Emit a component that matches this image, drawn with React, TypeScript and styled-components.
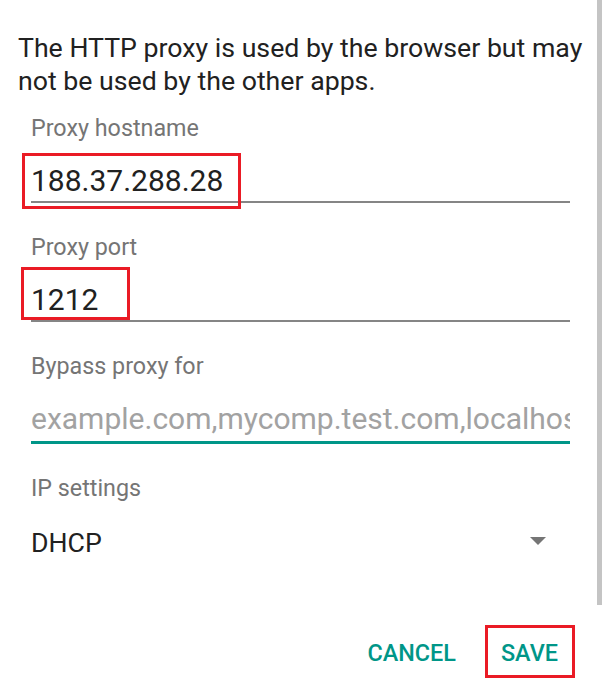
import React, { FC, ReactNode } from "react";
import styled, { createGlobalStyle } from "styled-components";

const GlobalStyle = createGlobalStyle`
  html, body {
    margin: 0;
    padding: 0;
    background: #ffffff;
  }
  body {
    font-family: Roboto, "Noto Sans", "Liberation Sans", sans-serif;
    color: #212121;
    -webkit-font-smoothing: antialiased;
  }
  * {
    box-sizing: border-box;
  }
`;

const Dialog = styled.div({
  width: 602,
  minHeight: 695,
  padding: "32px 0 0 0",
  position: "relative",
  overflow: "hidden",
});

const ScrollThumb = styled.div({
  position: "absolute",
  top: 0,
  right: 0,
  width: 5,
  height: 605,
  backgroundColor: "#c4c4c4",
});

const Intro = styled.p({
  margin: "0 0 17px 0",
  padding: "0 18px",
  fontSize: 26.7,
  lineHeight: "32.5px",
  color: "#212121",
});

const Fields = styled.div({
  display: "flex",
  flexDirection: "column",
  gap: 30,
  padding: "0 32px 0 31px",
});

const Field = styled.div({
  display: "flex",
  flexDirection: "column",
});

const Label = styled.div({
  fontSize: 23.3,
  lineHeight: "28px",
  color: "#757575",
});

const ValueRow = styled.div<{ $focused?: boolean }>(({ $focused }) => ({
  marginTop: 21,
  height: $focused ? 43 : 40,
  paddingBottom: $focused ? 4 : 2,
  borderBottom: $focused ? "3px solid #009688" : "2px solid #858585",
  fontSize: 30,
  lineHeight: "36px",
  whiteSpace: "nowrap",
}));

const Value = styled.span({
  color: "#212121",
});

const Placeholder = styled.div({
  color: "#a2a2a2",
  overflow: "hidden",
  whiteSpace: "nowrap",
});

const SpinnerRow = styled.div({
  marginTop: 23,
  height: 36,
  display: "flex",
  alignItems: "center",
  justifyContent: "space-between",
  paddingRight: 24,
});

const SpinnerText = styled.span({
  fontSize: 26.7,
  lineHeight: "36px",
  color: "#212121",
});

const Caret = styled.svg({
  width: 16,
  height: 8,
  marginTop: -4,
  fill: "#757575",
});

const Actions = styled.div({
  display: "flex",
  justifyContent: "flex-end",
  alignItems: "center",
  gap: 45,
  marginTop: 78,
  paddingRight: 44,
});

const ActionButton = styled.button({
  border: "none",
  background: "none",
  padding: 0,
  margin: 0,
  fontFamily: "Roboto, 'Noto Sans', 'Liberation Sans', sans-serif",
  fontWeight: 500,
  fontSize: 23.4,
  lineHeight: "28px",
  color: "#009688",
  textTransform: "uppercase",
  cursor: "pointer",
});

// red annotation frame drawn over a part of the screenshot
const Marked = styled.span<{ $t: number; $r: number; $b: number; $l: number }>(
  ({ $t, $r, $b, $l }) => ({
    position: "relative",
    display: "inline-block",
    verticalAlign: "top",
    "&::after": {
      content: '""',
      position: "absolute",
      top: -$t,
      right: -$r,
      bottom: -$b,
      left: -$l,
      border: "3px solid #ea1b25",
      pointerEvents: "none",
    },
  }),
);

type TextFieldProps = {
  label: string;
  focused?: boolean;
  children: ReactNode;
};

const TextField: FC<TextFieldProps> = ({ label, focused, children }) => (
  <Field>
    <Label>{label}</Label>
    <ValueRow $focused={focused}>{children}</ValueRow>
  </Field>
);

const App: FC = () => {
  return (
    <Dialog>
      <GlobalStyle />
      <ScrollThumb />
      <Intro>
        The HTTP proxy is used by the browser but may not be used by the other
        apps.
      </Intro>
      <Fields>
        <TextField label="Proxy hostname">
          <Marked $t={10} $r={18} $b={10} $l={9}>
            <Value>188.37.288.28</Value>
          </Marked>
        </TextField>
        <TextField label="Proxy port">
          <Marked $t={15} $r={32} $b={2} $l={10}>
            <Value>1212</Value>
          </Marked>
        </TextField>
        <TextField label="Bypass proxy for" focused>
          <Placeholder>example.com,mycomp.test.com,localhost</Placeholder>
        </TextField>
        <Field>
          <Label>IP settings</Label>
          <SpinnerRow>
            <SpinnerText>DHCP</SpinnerText>
            <Caret viewBox="0 0 16 8">
              <polygon points="0,0 16,0 8,8" />
            </Caret>
          </SpinnerRow>
        </Field>
      </Fields>
      <Actions>
        <ActionButton>Cancel</ActionButton>
        <Marked $t={14} $r={17} $b={11} $l={16}>
          <ActionButton>Save</ActionButton>
        </Marked>
      </Actions>
    </Dialog>
  );
};

export default App;
